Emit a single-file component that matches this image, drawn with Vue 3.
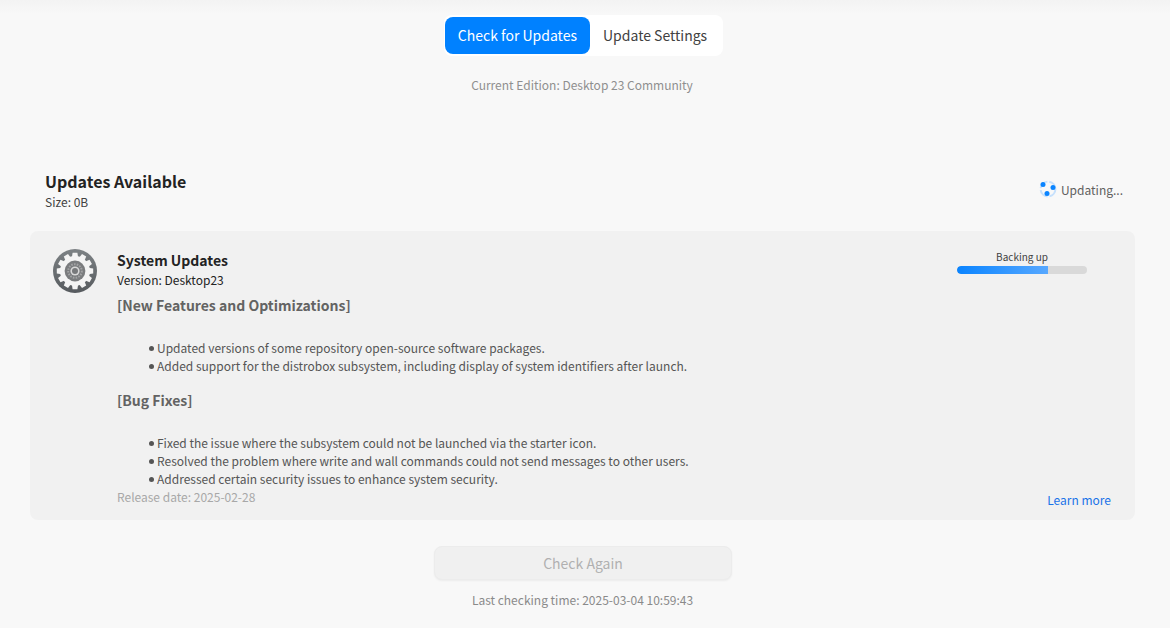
<template>
  <div class="page">
    <div class="tabs">
      <div class="tab active">Check for Updates</div>
      <div class="tab">Update Settings</div>
    </div>
    <div class="edition">Current Edition: Desktop 23 Community</div>

    <div class="summary">
      <div>
        <div class="title">Updates Available</div>
        <div class="size">Size: 0B</div>
      </div>
      <div class="status">
        <svg class="spinner" width="18" height="18" viewBox="0 0 18 18">
          <circle cx="9" cy="9" r="7.4" fill="none" stroke="#c6e0fc" stroke-width="2" stroke-dasharray="10 2"/>
          <circle cx="4" cy="4.6" r="2.5" fill="#0a84ff"/>
          <circle cx="14" cy="7.4" r="2.5" fill="#0a84ff"/>
          <circle cx="8" cy="13.6" r="2.5" fill="#0a84ff"/>
        </svg>
        <span>Updating...</span>
      </div>
    </div>

    <div class="card">
      <svg class="gear" width="46" height="46" viewBox="0 0 46 46">
        <defs>
          <linearGradient id="disc" x1="0" y1="0" x2="0" y2="1">
            <stop offset="0" stop-color="#7d8285"/>
            <stop offset="1" stop-color="#565a5e"/>
          </linearGradient>
        </defs>
        <circle cx="23" cy="23" r="22" fill="url(#disc)"/>
        <g fill="#f4f4f4">
          <path v-for="a in teeth" :key="a" d="M19.8 10 L20.6 4.8 H25.4 L26.2 10Z" :transform="`rotate(${a} 23 23)`"/>
        </g>
        <circle cx="23" cy="23" r="15" fill="#f4f4f4"/>
        <circle cx="23" cy="23" r="10.4" fill="#7a7c7e"/>
        <circle cx="23" cy="23" r="6.8" fill="none" stroke="#a2a3a4" stroke-width="2" stroke-dasharray="1.6 1.2"/>
        <circle cx="23" cy="23" r="4.6" fill="#d8d8d8"/>
        <circle cx="23" cy="23" r="3" fill="#77797b"/>
      </svg>

      <div class="body">
        <div class="name">System Updates</div>
        <div class="version">Version: Desktop23</div>
        <div class="heading">[New Features and Optimizations]</div>
        <ul class="list">
          <li>Updated versions of some repository open-source software packages.</li>
          <li>Added support for the distrobox subsystem, including display of system identifiers after launch.</li>
        </ul>
        <div class="heading second">[Bug Fixes]</div>
        <ul class="list">
          <li>Fixed the issue where the subsystem could not be launched via the starter icon.</li>
          <li>Resolved the problem where write and wall commands could not send messages to other users.</li>
          <li>Addressed certain security issues to enhance system security.</li>
        </ul>
        <div class="release">Release date: 2025-02-28</div>
      </div>

      <div class="side">
        <div class="progress">
          <div class="progress-label">Backing up</div>
          <div class="track"><div class="fill" :style="{ width: progress + '%' }"></div></div>
        </div>
        <a class="learn">Learn more</a>
      </div>
    </div>

    <div class="again">Check Again</div>
    <div class="last">Last checking time: 2025-03-04 10:59:43</div>
  </div>
</template>

<script setup>
const teeth = [0, 30, 60, 90, 120, 150, 180, 210, 240, 270, 300, 330]
const progress = 70
</script>

<style>
html, body { margin: 0; background: #f8f8f8; }
</style>

<style scoped>
.page {
  width: 1170px;
  height: 628px;
  box-sizing: border-box;
  padding: 15px 5px 0 0;
  overflow: hidden;
  display: flex;
  flex-direction: column;
  align-items: center;
  font-family: "Noto Sans CJK SC", "Noto Sans", sans-serif;
  background: linear-gradient(#f3f3f3 0, #f8f8f8 14px);
}
.tabs {
  display: flex;
  align-items: center;
  height: 41px;
  margin-left: 2px;
  background: #fff;
  border-radius: 8px;
  padding-left: 1px;
}
.tab {
  height: 37px;
  line-height: 37px;
  font-size: 14px;
  padding: 0 13px;
  color: #414141;
  border-radius: 8px;
  white-space: nowrap;
}
.tab.active { background: #0081ff; color: #fff; }
.tab:last-child { padding: 0 16px 0 13px; }
.edition {
  margin: 20px 1px 0 0;
  font-size: 12px;
  line-height: 18px;
  color: #8f8f8f;
}
.summary {
  align-self: stretch;
  margin: 76px 42px 0 45px;
  display: flex;
  justify-content: space-between;
  align-items: center;
}
.title { font-size: 16px; line-height: 22px; font-weight: 700; color: #232323; }
.size { font-size: 12px; line-height: 18px; color: #414141; margin-top: 1px; }
.status { display: flex; align-items: center; gap: 4px; font-size: 12px; color: #5f5f5f; margin-top: -3px; }
.spinner { display: block; }
.card {
  align-self: stretch;
  margin: 20px 30px 0 30px;
  height: 289px;
  box-sizing: border-box;
  background: #f1f1f1;
  border-radius: 8px;
  padding: 18px 23px 0 22px;
  display: flex;
}
.gear { flex: none; margin: -1px 19px 0 0; }
.body { flex: 1; min-width: 0; }
.name { font-size: 14px; line-height: 20px; font-weight: 700; color: #232323; margin-top: 1px; }
.version { font-size: 12px; line-height: 18px; color: #232323; margin-top: 1px; }
.heading { font-size: 14px; line-height: 20px; font-weight: 700; color: #636363; margin-top: 6px; }
.heading.second { margin-top: 15px; }
.list { margin: 24px 0 0; padding: 0 0 0 40px; font-size: 12px; line-height: 18px; color: #555; list-style: none; }
.list li { position: relative; }
.list li::before {
  content: "";
  position: absolute;
  left: -8px;
  top: 7px;
  width: 5px;
  height: 5px;
  border-radius: 50%;
  background: #555;
}
.release { font-size: 12px; line-height: 18px; color: #a8a8a8; }
.side {
  flex: none;
  width: 130px;
  display: flex;
  flex-direction: column;
  justify-content: space-between;
  align-items: flex-end;
  height: 260px;
}
.progress { width: 130px; margin-right: 25px; }
.progress-label { font-size: 10px; line-height: 16px; text-align: center; color: #414141; }
.track { height: 8px; border-radius: 4px; background: #d9d9d9; overflow: hidden; margin-top: 1px; }
.fill { height: 100%; border-radius: 4px 0 0 4px; background: linear-gradient(90deg, #0a84ff, #57a8ff); }
.learn { font-size: 12px; line-height: 18px; color: #1a73e8; margin-right: 1px; }
.again {
  margin: 26px 0 0 1px;
  width: 298px;
  height: 34px;
  box-sizing: border-box;
  text-align: center;
  font-size: 14px;
  color: #b0b0b0;
  background: #f0f0f0;
  border: 1px solid #ececec;
  border-radius: 8px;
  box-shadow: 0 1px 2px rgba(0,0,0,.05);
  line-height: 32px;
}
.last { margin-top: 11px; font-size: 12px; line-height: 18px; color: #8a8a8a; }
</style>
